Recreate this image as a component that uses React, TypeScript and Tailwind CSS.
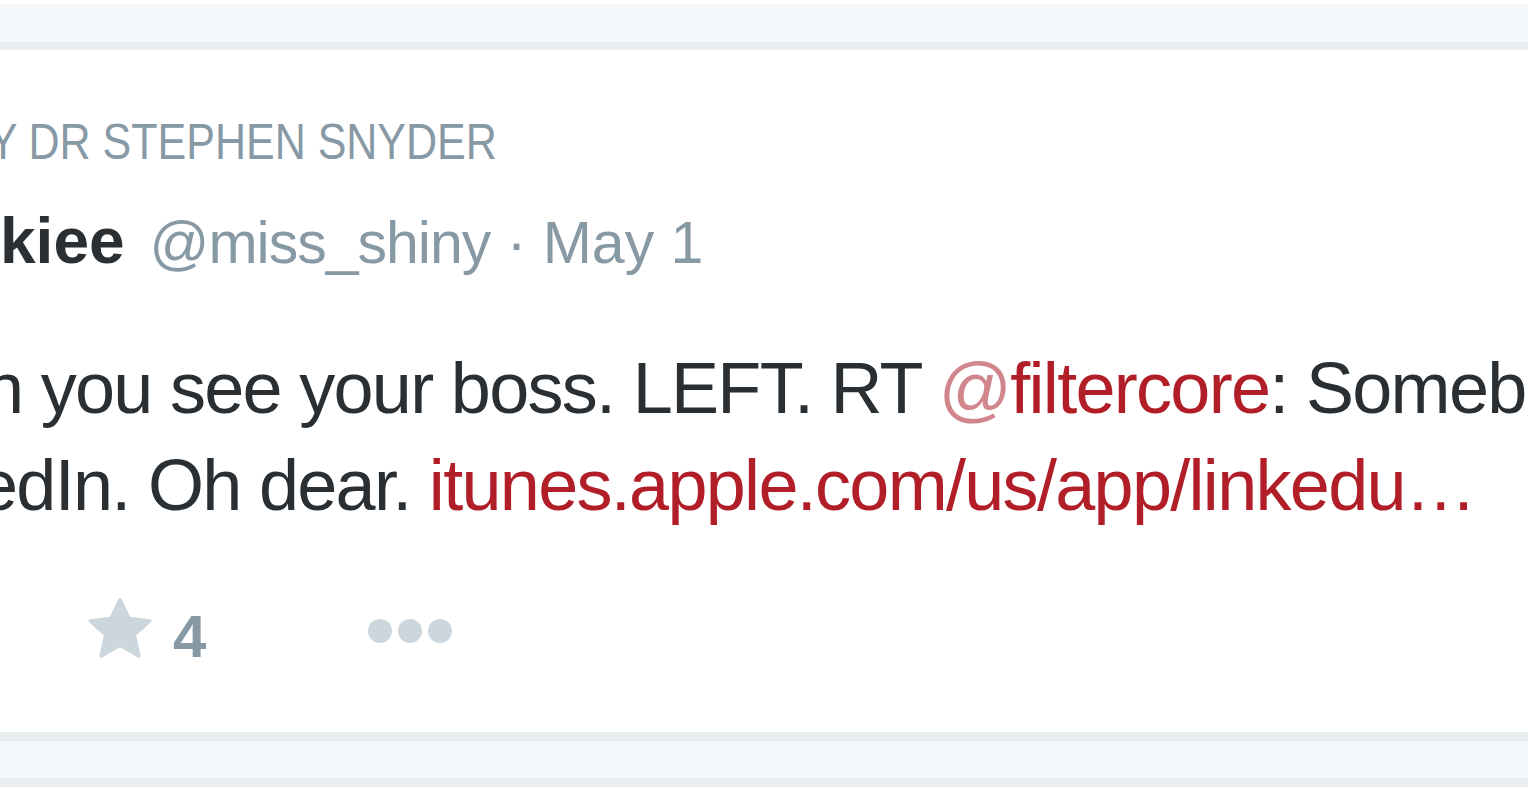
import React from "react";

function Star() {
  return (
    <svg width="68" height="66" viewBox="0 0 24 24" className="shrink-0">
      <polygon
        points="12,1.4 15.3,8.2 22.8,9.1 17.2,14.1 18.8,21.8 12,17.9 5.2,21.8 6.8,14.1 1.2,9.1 8.7,8.2"
        fill="#ccd6dd"
        stroke="#ccd6dd"
        strokeWidth="1.3"
        strokeLinejoin="round"
      />
    </svg>
  );
}

export default function App() {
  return (
    <main className="h-screen w-full overflow-hidden bg-white font-['Liberation_Sans',Arial,sans-serif]">
      {/* top gap + stream divider */}
      <div className="h-[4px]" />
      <div className="h-[38px] bg-[#f5f8fa]" />
      <div className="h-[8px] bg-[#e8edf0]" />

      {/* tweet card */}
      <div className="h-[682px] bg-white pt-[68px] whitespace-nowrap">
        {/* retweet context */}
        <div className="-ml-[40px] origin-left scale-x-[0.86] text-[50px] leading-[48px] text-[#8899a6]">
          BY DR STEPHEN SNYDER
        </div>

        {/* header */}
        <div className="mt-[43px] text-[64px] leading-[64px] text-[#292f33]">
          <span className="font-bold">kiee</span>
          <span className="ml-[25px] text-[59px] text-[#8899a6]">
            <span className="tracking-[-1px]">@miss_shiny</span> · May 1
          </span>
        </div>

        {/* text */}
        <div className="mt-[65px] text-[72px] leading-[97px] tracking-[-1.7px] text-[#292f33]">
          <div className="-ml-[16px]">
            n you see your boss. LEFT. RT{" "}
            <span className="text-[#d0868b]">@</span>
            <span className="text-[#b11e28]">filtercore</span>: Someb
          </div>
          <div className="-ml-[22px]">
            edIn. Oh dear.{" "}
            <span className="text-[#b11e28]">itunes.apple.com/us/app/linkedu…</span>
          </div>
        </div>

        {/* actions */}
        <div className="mt-[62px] flex items-start">
          <div className="ml-[86px]">
            <Star />
          </div>
          <span className="ml-[19px] mt-[11px] text-[60px] leading-[60px] font-bold text-[#8899a6]">
            4
          </span>
          <div className="ml-[162px] mt-[23px] flex gap-[6px]">
            <span className="h-[24px] w-[24px] rounded-full bg-[#ccd6dd]" />
            <span className="h-[24px] w-[24px] rounded-full bg-[#ccd6dd]" />
            <span className="h-[24px] w-[24px] rounded-full bg-[#ccd6dd]" />
          </div>
        </div>
      </div>

      {/* bottom divider */}
      <div className="h-[9px] bg-[#e8edf0]" />
      <div className="h-[37px] bg-[#f5f8fa]" />
      <div className="h-[9px] bg-[#e8edf0]" />
    </main>
  );
}
